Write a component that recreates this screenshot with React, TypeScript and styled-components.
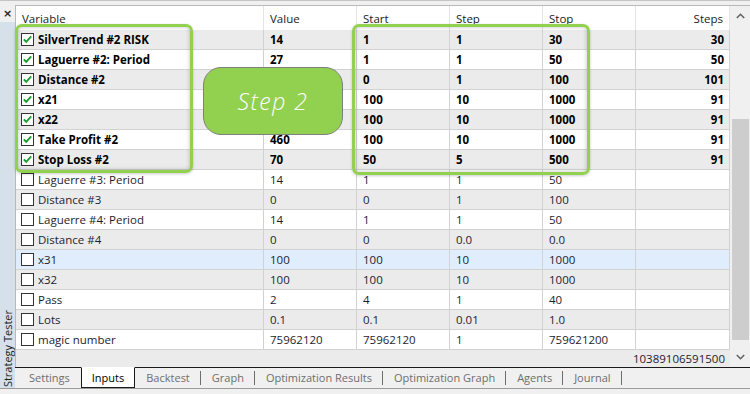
import React from "react";
import styled, { createGlobalStyle } from "styled-components";

const Global = createGlobalStyle`
  html, body { margin: 0; padding: 0; background: #f0f0f0; }
  body { font-family: "Open Sans", "Noto Sans", sans-serif; }
`;

type Row = {
  name: string;
  value: string;
  start: string;
  step: string;
  stop: string;
  steps: string;
  checked?: boolean;
  selected?: boolean;
};

const rows: Row[] = [
  { name: "SilverTrend #2 RISK", value: "14", start: "1", step: "1", stop: "30", steps: "30", checked: true },
  { name: "Laguerre #2: Period", value: "27", start: "1", step: "1", stop: "50", steps: "50", checked: true },
  { name: "Distance #2", value: "0", start: "0", step: "1", stop: "100", steps: "101", checked: true },
  { name: "x21", value: "100", start: "100", step: "10", stop: "1000", steps: "91", checked: true },
  { name: "x22", value: "100", start: "100", step: "10", stop: "1000", steps: "91", checked: true },
  { name: "Take Profit #2", value: "460", start: "100", step: "10", stop: "1000", steps: "91", checked: true },
  { name: "Stop Loss #2", value: "70", start: "50", step: "5", stop: "500", steps: "91", checked: true },
  { name: "Laguerre #3: Period", value: "14", start: "1", step: "1", stop: "50", steps: "" },
  { name: "Distance #3", value: "0", start: "0", step: "1", stop: "100", steps: "" },
  { name: "Laguerre #4: Period", value: "14", start: "1", step: "1", stop: "50", steps: "" },
  { name: "Distance #4", value: "0", start: "0", step: "0.0", stop: "0.0", steps: "" },
  { name: "x31", value: "100", start: "100", step: "10", stop: "1000", steps: "", selected: true },
  { name: "x32", value: "100", start: "100", step: "10", stop: "1000", steps: "" },
  { name: "Pass", value: "2", start: "4", step: "1", stop: "40", steps: "" },
  { name: "Lots", value: "0.1", start: "0.1", step: "0.01", stop: "1.0", steps: "" },
  { name: "magic number", value: "75962120", start: "75962120", step: "1", stop: "759621200", steps: "" },
];

const tabs = ["Settings", "Inputs", "Backtest", "Graph", "Optimization Results", "Optimization Graph", "Agents", "Journal"];

const COLS = "248px 93px 93px 93px 93px 94px";

const Window = styled.div`
  width: 750px;
  height: 394px;
  display: flex;
  flex-direction: column;
  background: #f0f0f0;
  overflow: hidden;
  position: relative;
  border-top: 1px solid #c4c4c4;
  box-sizing: border-box;
  font-size: 11.5px;
  color: #000;
`;

const Body = styled.div`
  flex: 1;
  display: flex;
  min-height: 0;
`;

const SideStrip = styled.div`
  width: 15px;
  display: flex;
  flex-direction: column;
`;

const CloseBox = styled.div`
  height: 18px;
  display: flex;
  align-items: center;
  justify-content: center;
  font-family: "DejaVu Sans", sans-serif;
  font-weight: bold;
  font-size: 11px;
  color: #222;
  padding-top: 3px;
`;

const SideLabel = styled.div`
  flex: 1;
  background: #d6e0ea;
  display: flex;
  align-items: flex-end;
  justify-content: center;
  padding-bottom: 1px;
`;

const VerticalText = styled.span`
  writing-mode: vertical-rl;
  transform: rotate(180deg);
  font-size: 11px;
  color: #1e1e1e;
  white-space: nowrap;
`;

const Main = styled.div`
  flex: 1;
  display: flex;
  flex-direction: column;
  padding-top: 4px;
`;

const TableArea = styled.div`
  flex: 1;
  display: flex;
  border-top: 1px solid #b9b9b9;
  border-left: 1px solid #b9b9b9;
  position: relative;
  background: #ebebeb;
`;

const Grid = styled.div`
  width: 714px;
  display: flex;
  flex-direction: column;
`;

const HeaderRow = styled.div`
  display: grid;
  grid-template-columns: ${COLS};
  height: 24px;
  background: #fff;
`;

const HeaderCell = styled.div<{ $right?: boolean }>`
  display: flex;
  align-items: center;
  justify-content: ${(p) => (p.$right ? "flex-end" : "flex-start")};
  padding: 0 6px 0 6px;
  border-right: 1px solid #e4e4e4;
  color: #1a1a1a;
`;

const DataRow = styled.div<{ $bg: string }>`
  display: grid;
  grid-template-columns: ${COLS};
  height: 20px;
  background: ${(p) => p.$bg};
`;

const Cell = styled.div<{ $bold?: boolean; $right?: boolean }>`
  display: flex;
  align-items: center;
  justify-content: ${(p) => (p.$right ? "flex-end" : "flex-start")};
  padding: 0 5px 0 6px;
  border-right: 1px solid #d2d2d2;
  border-bottom: 1px solid #d2d2d2;
  font-weight: ${(p) => (p.$bold ? 700 : 400)};
  color: ${(p) => (p.$bold ? "#000" : "#1c1c30")};
  white-space: nowrap;
  overflow: hidden;
`;

const NameCell = styled(Cell)`
  padding-left: 5px;
  gap: 4px;
`;

const TotalRow = styled.div`
  height: 17px;
  display: flex;
  justify-content: flex-end;
  align-items: center;
  padding-right: 5px;
  color: #1c1c30;
`;

const ScrollBar = styled.div`
  width: 21px;
  display: flex;
  flex-direction: column;
  align-items: center;
  background: #f0f0f0;
`;

const Arrow = styled.div`
  height: 20px;
  display: flex;
  align-items: center;
  justify-content: center;
`;

const Track = styled.div`
  flex: 1;
  width: 100%;
  display: flex;
  flex-direction: column;
  padding-top: 93px;
  padding-bottom: 7px;
  box-sizing: border-box;
`;

const Thumb = styled.div`
  flex: 1;
  margin: 0 2px;
  background: #cdcdcd;
`;

const Callout = styled.div`
  position: absolute;
  border: 3px solid #92d050;
  border-radius: 7px;
  box-shadow: inset 0 0 4px rgba(0, 0, 0, 0.25), 0 1px 3px rgba(0, 0, 0, 0.2);
  pointer-events: none;
`;

const Bubble = styled.div`
  position: absolute;
  left: 187px;
  top: 61px;
  width: 138px;
  height: 66px;
  background: #92d050;
  border: 1px solid #7f7f7f;
  border-radius: 18px;
  display: flex;
  align-items: center;
  justify-content: center;
  color: #fff;
  font-family: "Open Sans", sans-serif;
  font-style: italic;
  font-weight: 300;
  font-size: 23px;
  letter-spacing: 1.5px;
`;

const TabBar = styled.div`
  height: 20px;
  border-top: 1px solid #1a1a1a;
  display: flex;
  align-items: flex-start;
  padding-left: 3px;
  font-size: 11px;
`;

const Tab = styled.div<{ $active?: boolean; $sep?: boolean }>`
  height: 19px;
  display: flex;
  align-items: center;
  padding: 0 10px;
  margin-top: -1px;
  color: ${(p) => (p.$active ? "#000" : "#6e6e6e")};
  background: ${(p) => (p.$active ? "#fff" : "transparent")};
  border: 1px solid ${(p) => (p.$active ? "#1a1a1a" : "transparent")};
  border-top-color: ${(p) => (p.$active ? "#fff" : "transparent")};
  position: relative;
  &::after {
    content: "";
    display: ${(p) => (p.$sep ? "block" : "none")};
    position: absolute;
    right: -1px;
    top: 3px;
    height: 14px;
    border-right: 1px solid #6e6e6e;
  }
`;

const Footer = styled.div`
  height: 5px;
  border-top: 1px solid #9a9a9a;
  background: #f0f0f0;
`;

const CheckBox = ({ checked }: { checked?: boolean }) => (
  <svg width="13" height="13" viewBox="0 0 13 13" style={{ flexShrink: 0 }}>
    <rect x="0.5" y="0.5" width="12" height="12" fill="#fff" stroke="#333" />
    {checked && <path d="M2.8 6.4 L5.2 8.9 L10.2 3.4" fill="none" stroke="#1a9a2a" strokeWidth="1.8" />}
  </svg>
);

const ChevronUp = () => (
  <svg width="9" height="6" viewBox="0 0 9 6">
    <path d="M0.8 5 L4.5 1.3 L8.2 5" fill="none" stroke="#606060" strokeWidth="1.5" />
  </svg>
);

const ChevronDown = () => (
  <svg width="9" height="6" viewBox="0 0 9 6">
    <path d="M0.8 1 L4.5 4.7 L8.2 1" fill="none" stroke="#606060" strokeWidth="1.5" />
  </svg>
);

export default function App() {
  return (
    <Window>
      <Global />
      <Body>
        <SideStrip>
          <CloseBox>×</CloseBox>
          <SideLabel>
            <VerticalText>Strategy Tester</VerticalText>
          </SideLabel>
        </SideStrip>
        <Main>
          <TableArea>
            <Grid>
              <HeaderRow>
                <HeaderCell>Variable</HeaderCell>
                <HeaderCell>Value</HeaderCell>
                <HeaderCell>Start</HeaderCell>
                <HeaderCell>Step</HeaderCell>
                <HeaderCell>Stop</HeaderCell>
                <HeaderCell $right>Steps</HeaderCell>
              </HeaderRow>
              {rows.map((r, i) => {
                const bg = r.selected ? "#dfedfc" : i % 2 === 0 ? "#ebebeb" : "#ffffff";
                const b = !!r.checked;
                return (
                  <DataRow key={r.name} $bg={bg}>
                    <NameCell $bold={b}>
                      <CheckBox checked={r.checked} />
                      {r.name}
                    </NameCell>
                    <Cell $bold={b}>{r.value}</Cell>
                    <Cell $bold={b}>{r.start}</Cell>
                    <Cell $bold={b}>{r.step}</Cell>
                    <Cell $bold={b}>{r.stop}</Cell>
                    <Cell $bold={b} $right>{r.steps}</Cell>
                  </DataRow>
                );
              })}
              <TotalRow>10389106591500</TotalRow>
            </Grid>
            <ScrollBar>
              <Arrow><ChevronUp /></Arrow>
              <Track><Thumb /></Track>
              <Arrow><ChevronDown /></Arrow>
            </ScrollBar>
            <Callout style={{ left: -1, top: 18, width: 172, height: 143 }} />
            <Callout style={{ left: 336, top: 18, width: 232, height: 145 }} />
            <Bubble>Step 2</Bubble>
          </TableArea>
          <TabBar>
            {tabs.map((t, i) => (
              <Tab key={t} $active={t === "Inputs"} $sep={i >= 2}>{t}</Tab>
            ))}
          </TabBar>
        </Main>
      </Body>
      <Footer />
    </Window>
  );
}
